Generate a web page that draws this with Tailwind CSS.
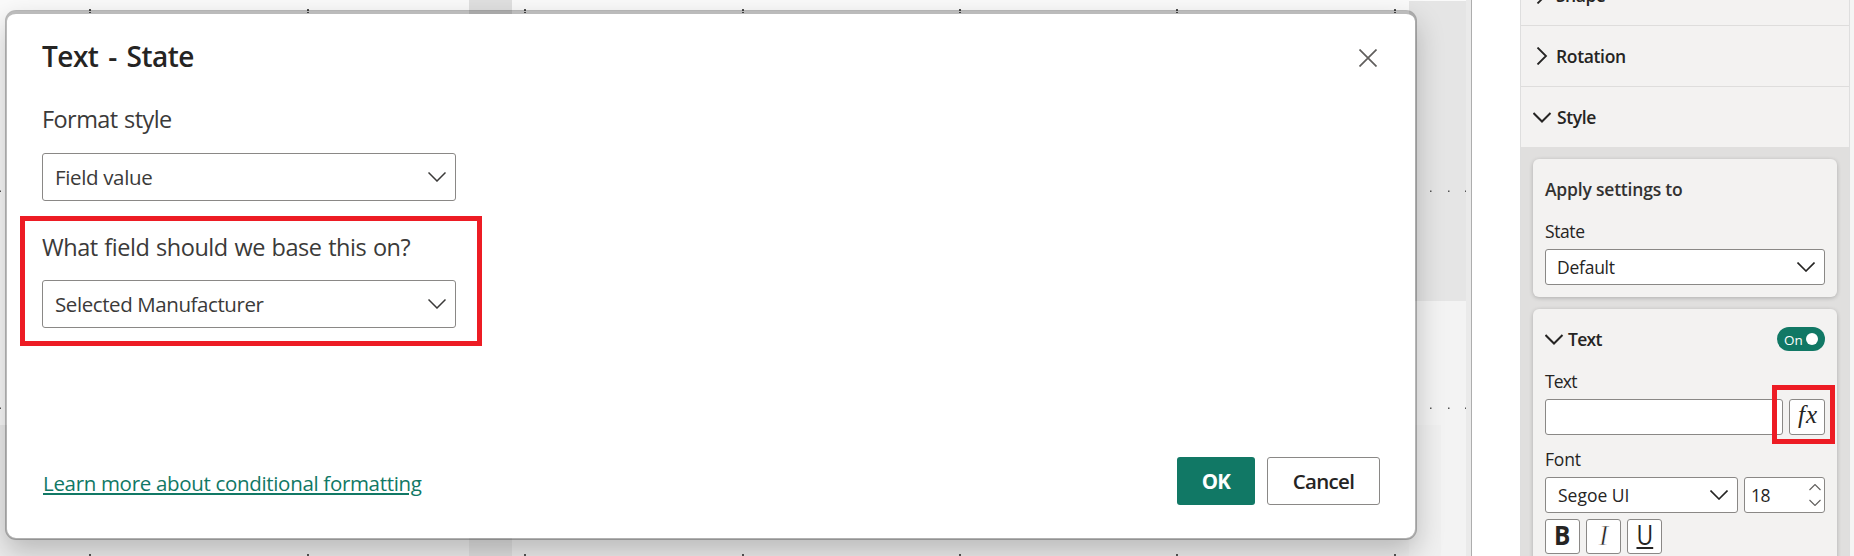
<!DOCTYPE html>
<html lang="en">
<head>
<meta charset="utf-8">
<title>Text - State</title>
<script src="https://cdn.jsdelivr.net/npm/@tailwindcss/browser@4"></script>
</head>
<body class="flex h-[556px] w-[1854px] overflow-hidden bg-white font-['Open_Sans',sans-serif] text-[#252423]">

<!-- Report canvas with dialog -->
<main class="relative h-[556px] w-[1472px] shrink-0 overflow-hidden border-r border-[#adadad] bg-[#eaeaea]">
  <div class="absolute left-0 top-0 h-[425px] w-[1466px] bg-[#fafafa]"></div>
  <div class="absolute left-0 top-[425px] h-[131px] w-[1441px] bg-[#ededed]"></div>
  <div class="absolute left-[1409px] top-[301px] h-[255px] w-[57px] bg-[#f3f3f3]"></div>
  <div class="absolute left-[1409px] top-[425px] h-[131px] w-[32px] bg-[#f0f0f0]"></div>
  <div class="absolute left-[469px] top-0 h-[556px] w-[43px] bg-[#e0e0e0]"></div>
  <div class="absolute left-[1409px] top-[1px] h-[300px] w-[57px] bg-[#e5e5e5]"></div>

  <!-- Ruler ticks -->
  <svg class="absolute left-0 top-0" width="1472" height="556" fill="#555">
    <path d="M89 9h2v2h-2zM307 9h2v2h-2zM524 9h2v2h-2zM742 9h2v2h-2zM959 9h2v2h-2zM1176 9h2v2h-2zM1394 9h2v2h-2z"/>
    <path d="M89 12h2v1h-2zM307 12h2v1h-2zM524 12h2v1h-2zM742 12h2v1h-2zM959 12h2v1h-2zM1176 12h2v1h-2zM1394 12h2v1h-2z"/>
    <path d="M89 554h2v2h-2zM307 554h2v2h-2zM524 554h2v2h-2zM742 554h2v2h-2zM959 554h2v2h-2zM1176 554h2v2h-2zM1394 554h2v2h-2z"/>
    <path d="M0 190.500h1v1.500h-1zM1430 190.500h1.500v1.500h-1.500zM1448 190.500h1.500v1.500h-1.500zM1465 190.500h1v1.500h-1zM0 407.500h1v1.500h-1zM1430 407.500h1.500v1.500h-1.500zM1448 407.500h1.500v1.500h-1.500zM1465 407.500h1v1.500h-1z"/>
  </svg>

  <section class="absolute left-[5px] top-[10px] flex h-[530px] w-[1412px] flex-col rounded-[11px] border-2 border-t-4 border-black/25 bg-white bg-clip-padding pl-[35px] pr-[35px] shadow-[0_12px_28px_rgba(0,0,0,0.22)]">
    <header class="flex items-start justify-between pt-[26px]">
      <h1 class="text-[28px] font-semibold leading-8 tracking-[-0.5px] [word-spacing:3px]">Text - State</h1>
      <svg class="mr-[3px] mt-[9px]" width="18" height="18" fill="none" stroke="#605e5c" stroke-width="1.700"><path d="M.5.5l17 17M17.500.5l-17 17"/></svg>
    </header>
    <label class="mt-[31px] text-[23.500px] leading-8 tracking-[-0.58px] text-[#3b3a39] [word-spacing:1px]">Format style</label>
    <div class="mt-[18px] flex h-[48px] w-[414px] items-center justify-between rounded-[3px] border border-[#8a8886] pl-[12px] pr-[9px] text-[20.500px] tracking-[-0.35px] text-[#3b3a39]">
      <span>Field value</span>
      <svg width="18" height="10" fill="none" stroke="#3b3a39" stroke-width="1.500"><path d="M.5.5L9 9l8.500-8.500"/></svg>
    </div>
    <label class="mt-[30px] text-[23.500px] leading-8 tracking-[-0.46px] text-[#3b3a39] [word-spacing:1px]">What field should we base this on?</label>
    <div class="mt-[17px] flex h-[48px] w-[414px] items-center justify-between rounded-[3px] border border-[#8a8886] pl-[12px] pr-[9px] text-[20.500px] tracking-[-0.41px] text-[#3b3a39]">
      <span>Selected Manufacturer</span>
      <svg width="18" height="10" fill="none" stroke="#3b3a39" stroke-width="1.500"><path d="M.5.5L9 9l8.500-8.500"/></svg>
    </div>
    <footer class="mb-[33px] mt-auto flex items-center">
      <a class="ml-[1px] mt-[3px] text-[20.500px] leading-8 tracking-[-0.32px] text-[#117865] underline decoration-2 underline-offset-2">Learn more about conditional formatting</a>
      <button class="ml-auto h-[48px] w-[78px] rounded-[3px] bg-[#117865] text-[20.500px] font-bold tracking-[-0.8px] text-white">OK</button>
      <button class="ml-[12px] h-[48px] w-[113px] rounded-[3px] border border-[#8a8886] pt-[1px] text-[20.500px] font-semibold tracking-[-0.7px]">Cancel</button>
    </footer>
  </section>

  <!-- Field highlight -->
  <div class="absolute left-[20px] top-[216px] h-[130px] w-[462px] border-5 border-[#ed1c24]"></div>
</main>

<!-- Format pane -->
<aside class="relative ml-[48px] flex h-[556px] w-[330px] shrink-0 flex-col border-x border-[#dedede] bg-[#e0dfde] text-[17.500px]">
  <div class="-mt-[35px] flex h-[61px] shrink-0 items-center border-b border-[#dedddc] bg-[#f3f2f1] pl-[12px] font-semibold">
    <svg class="w-[24px]" viewBox="0 0 24 18" height="18" fill="none" stroke="#252423" stroke-width="1.800"><path d="M4.500.5L13 9l-8.500 8.500"/></svg>
    <span class="-ml-[1px] tracking-[-0.5px]">Shape</span>
  </div>
  <div class="flex h-[61px] shrink-0 items-center border-b border-[#dedddc] bg-[#f3f2f1] pl-[12px] font-semibold">
    <svg class="w-[24px]" viewBox="0 0 24 18" height="18" fill="none" stroke="#252423" stroke-width="1.800"><path d="M4.500.5L13 9l-8.500 8.500"/></svg>
    <span class="-ml-[1px] tracking-[-0.35px]">Rotation</span>
  </div>
  <div class="flex h-[60px] shrink-0 items-center bg-[#f3f2f1] pl-[12px] font-semibold">
    <svg class="w-[24px]" viewBox="0 0 24 18" height="18" fill="none" stroke="#252423" stroke-width="2"><path d="M.5 5L9 13.500 17.500 5"/></svg>
    <span class="tracking-[-0.4px]">Style</span>
  </div>

  <div class="mx-[12px] mt-[12px] flex h-[138px] shrink-0 flex-col rounded-[6px] bg-[#f3f2f1] px-[12px] pt-[18px] shadow-[0_1px_4px_rgba(0,0,0,0.22)]">
    <h2 class="font-semibold leading-6 tracking-[-0.2px] text-[#323130]">Apply settings to</h2>
    <label class="mt-[18px] leading-6 tracking-[-0.4px]">State</label>
    <div class="mt-[6px] flex h-[36px] items-center justify-between rounded-[3px] border border-[#8a8886] bg-white pl-[11px] pr-[9px]">
      <span class="tracking-[-0.25px]">Default</span>
      <svg width="18" height="10" fill="none" stroke="#252423" stroke-width="1.600"><path d="M.5.5L9 9l8.500-8.500"/></svg>
    </div>
  </div>

  <div class="mx-[12px] mt-[12px] flex h-[270px] shrink-0 flex-col rounded-[6px] bg-[#f3f2f1] px-[12px] pt-[18px] shadow-[0_1px_4px_rgba(0,0,0,0.22)]">
    <div class="flex h-6 items-center">
      <svg class="w-[24px]" viewBox="0 0 24 18" height="18" fill="none" stroke="#252423" stroke-width="2"><path d="M.5 5L9 13.500 17.500 5"/></svg>
      <h2 class="-ml-[1px] font-semibold tracking-[-0.7px]">Text</h2>
      <div class="ml-auto flex h-6 w-[48px] items-center justify-between rounded-full bg-[#117865] pl-[7px] pr-[7px] text-[13.500px] text-white">
        <span class="pt-[2px] tracking-[-0.1px]">On</span><span class="size-3 rounded-full bg-white"></span>
      </div>
    </div>
    <label class="mt-[18px] leading-6 tracking-[-0.8px]">Text</label>
    <div class="mt-[6px] flex gap-[6px]">
      <div class="h-[36px] w-[238px] rounded-[3px] border border-[#8a8886] bg-white"></div>
      <div class="flex h-[36px] w-[36px] items-center justify-center rounded-[3px] border border-[#8a8886] bg-white pb-[5px] pl-[2px] font-['Liberation_Serif',serif] text-[25px] italic leading-none"><span class="tracking-[1px]">fx</span></div>
    </div>
    <label class="mt-[12px] leading-6 tracking-[-0.2px]">Font</label>
    <div class="mt-[6px] flex gap-[6px]">
      <div class="flex h-[36px] w-[193px] items-center justify-between rounded-[3px] border border-[#8a8886] bg-white pl-[12px] pr-[9px]">
        <span>Segoe UI</span>
        <svg width="18" height="10" fill="none" stroke="#252423" stroke-width="1.600"><path d="M.5.5L9 9l8.500-8.500"/></svg>
      </div>
      <div class="flex h-[36px] w-[81px] items-center justify-between rounded-[3px] border border-[#8a8886] bg-white pl-[6px] pr-[3px]">
        <span class="tracking-[-0.6px]">18</span>
        <svg width="12" height="22" fill="none" stroke="#605e5c" stroke-width="1.100"><path d="M.5 6L6 .5 11.500 6M.5 16L6 21.500 11.500 16"/></svg>
      </div>
    </div>
    <div class="mt-[6px] flex gap-[6px] leading-none">
      <div class="flex h-[35px] w-[35px] items-center justify-center rounded-[3px] border border-[#8a8886] bg-white pb-[4px] text-[27px] font-bold"><span class="scale-x-90">B</span></div>
      <!-- Italic: thin slanted stem with serifs -->
      <div class="flex h-[35px] w-[35px] items-center justify-center rounded-[3px] border border-[#8a8886] bg-white pb-[3px] font-['Liberation_Serif',serif] text-[29px] italic text-[#252423] [-webkit-text-stroke:0.7px_white]">I</div>
      <div class="flex h-[35px] w-[35px] items-center justify-center rounded-[3px] border border-[#8a8886] bg-white pb-[5px] text-[27px]"><span class="scale-x-85 underline decoration-2 underline-offset-2">U</span></div>
    </div>
  </div>

  <!-- Conditional formatting highlight -->
  <div class="absolute left-[251px] top-[385px] h-[59px] w-[63px] border-5 border-[#ed1c24]"></div>
</aside>
<div class="h-[556px] flex-1 bg-[#f5f5f4]"></div>
</body>
</html>
